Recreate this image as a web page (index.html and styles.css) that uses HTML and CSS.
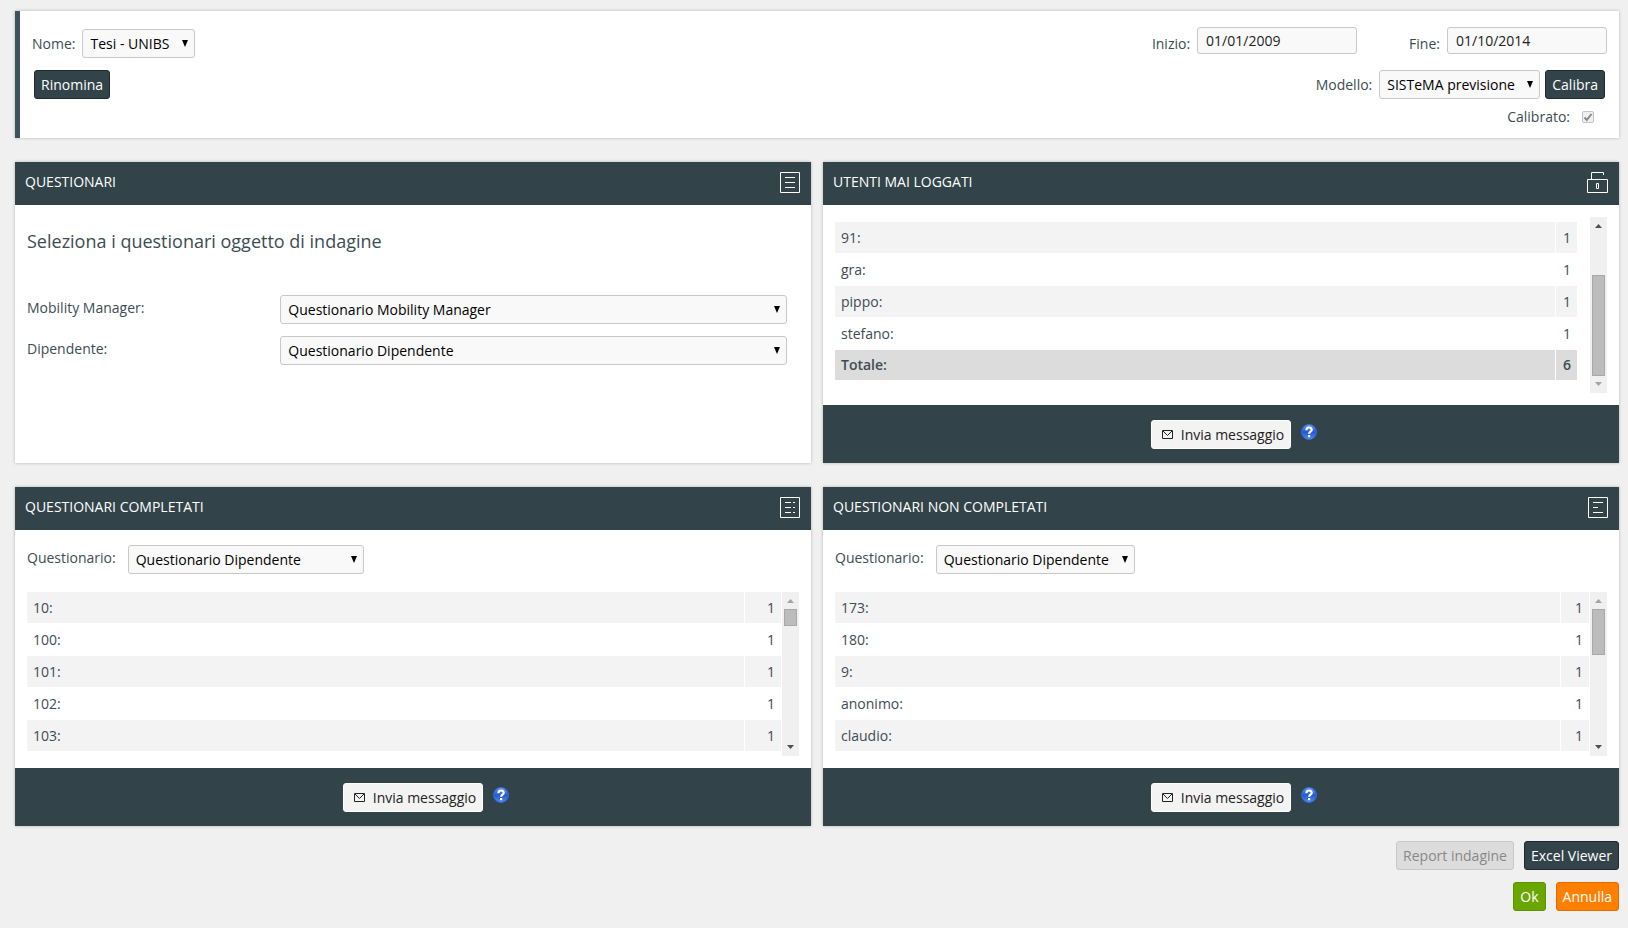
FILE: index.html
```
<!DOCTYPE html>
<html lang="it">
<head>
<meta charset="utf-8">
<title>Indagine</title>
<link rel="stylesheet" href="styles.css">
</head>
<body>
<main class="page">
  <form class="survey">
    <div class="survey-side survey-left">
      <div class="field"><label for="nome">Nome:</label><select id="nome" class="select select-name"><option>Tesi - UNIBS</option></select></div>
      <button type="button" class="btn btn-dark">Rinomina</button>
    </div>
    <div class="survey-side survey-right">
      <div class="dates">
        <div class="field"><label for="inizio">Inizio:</label><input id="inizio" class="input" type="text" value="01/01/2009"></div>
        <div class="field"><label for="fine">Fine:</label><input id="fine" class="input" type="text" value="01/10/2014"></div>
      </div>
      <div class="model">
        <div class="field"><label for="modello">Modello:</label><select id="modello" class="select select-model"><option>SISTeMA previsione</option></select></div>
        <button type="button" class="btn btn-dark">Calibra</button>
      </div>
      <div class="calibrated"><label for="calibrato">Calibrato:</label><input id="calibrato" class="check" type="checkbox" checked disabled></div>
    </div>
  </form>

  <div class="grid">
    <section class="panel">
      <header class="panel-head"><h2>QUESTIONARI</h2>
        <svg class="head-icon" width="20" height="21" viewBox="0 0 20 21"><path d="M.5.5h19v20H.5zM5 5.500h10M5 10.500h10M5 15.500h10"/></svg>
      </header>
      <div class="panel-body choose">
        <h3>Seleziona i questionari oggetto di indagine</h3>
        <div class="choose-row"><label for="mm">Mobility Manager:</label><select id="mm" class="select"><option>Questionario Mobility Manager</option></select></div>
        <div class="choose-row"><label for="dip">Dipendente:</label><select id="dip" class="select"><option>Questionario Dipendente</option></select></div>
      </div>
    </section>

    <section class="panel">
      <header class="panel-head"><h2>UTENTI MAI LOGGATI</h2>
        <svg class="head-icon" width="21" height="21" viewBox="0 0 21 21"><path d="M.5 7.500h20v13H.5zM4.500 7V.5h12V3M9.500 11.500h2v5h-2z"/></svg>
      </header>
      <div class="panel-body">
        <div class="list list-users">
          <table class="rows">
            <tr><th scope="row">91:</th><td>1</td></tr>
            <tr><th scope="row">gra:</th><td>1</td></tr>
            <tr><th scope="row">pippo:</th><td>1</td></tr>
            <tr><th scope="row">stefano:</th><td>1</td></tr>
            <tr class="total"><th scope="row">Totale:</th><td>6</td></tr>
          </table>
          <div class="bar bar-end"><i class="up"></i><span class="thumb"></span><i class="down"></i></div>
        </div>
      </div>
      <footer class="panel-foot">
        <button type="button" class="btn btn-light"><svg width="11" height="9" viewBox="0 0 11 9"><path d="M.5.5h10v8H.5zM1 1l4.500 4.500L10 1"/></svg>Invia messaggio</button>
        <svg class="help" width="16" height="16" viewBox="0 0 16 16"><use href="#help"/></svg>
      </footer>
    </section>

    <section class="panel">
      <header class="panel-head"><h2>QUESTIONARI COMPLETATI</h2>
        <svg class="head-icon" width="20" height="21" viewBox="0 0 20 21"><path d="M.5.5h19v20H.5zM5 5.500h6M13 5.500h2M5 10.500h6M13 10.500h2M5 15.500h6M13 15.500h2"/></svg>
      </header>
      <div class="panel-body">
        <div class="filter"><label for="q1">Questionario:</label><select id="q1" class="select select-done"><option>Questionario Dipendente</option></select></div>
        <div class="list list-done">
          <table class="rows">
            <tr><th scope="row">10:</th><td>1</td></tr>
            <tr><th scope="row">100:</th><td>1</td></tr>
            <tr><th scope="row">101:</th><td>1</td></tr>
            <tr><th scope="row">102:</th><td>1</td></tr>
            <tr><th scope="row">103:</th><td>1</td></tr>
          </table>
          <div class="bar bar-start"><i class="up"></i><span class="thumb"></span><i class="down"></i></div>
        </div>
      </div>
      <footer class="panel-foot">
        <button type="button" class="btn btn-light"><svg width="11" height="9" viewBox="0 0 11 9"><path d="M.5.5h10v8H.5zM1 1l4.500 4.500L10 1"/></svg>Invia messaggio</button>
        <svg class="help" width="16" height="16" viewBox="0 0 16 16"><use href="#help"/></svg>
      </footer>
    </section>

    <section class="panel">
      <header class="panel-head"><h2>QUESTIONARI NON COMPLETATI</h2>
        <svg class="head-icon" width="20" height="21" viewBox="0 0 20 21"><path d="M.5.5h19v20H.5zM5 5.500h10M5 10.500h5M5 15.500h10"/></svg>
      </header>
      <div class="panel-body">
        <div class="filter"><label for="q2">Questionario:</label><select id="q2" class="select select-open"><option>Questionario Dipendente</option></select></div>
        <div class="list list-open">
          <table class="rows">
            <tr><th scope="row">173:</th><td>1</td></tr>
            <tr><th scope="row">180:</th><td>1</td></tr>
            <tr><th scope="row">9:</th><td>1</td></tr>
            <tr><th scope="row">anonimo:</th><td>1</td></tr>
            <tr><th scope="row">claudio:</th><td>1</td></tr>
          </table>
          <div class="bar bar-start"><i class="up"></i><span class="thumb"></span><i class="down"></i></div>
        </div>
      </div>
      <footer class="panel-foot">
        <button type="button" class="btn btn-light"><svg width="11" height="9" viewBox="0 0 11 9"><path d="M.5.5h10v8H.5zM1 1l4.500 4.500L10 1"/></svg>Invia messaggio</button>
        <svg class="help" width="16" height="16" viewBox="0 0 16 16">
          <defs>
            <linearGradient id="helpfill" x1="0" y1="0" x2="0" y2="1"><stop offset="0" stop-color="#6f9cf0"/><stop offset=".5" stop-color="#2458d4"/><stop offset="1" stop-color="#4f8cf0"/></linearGradient>
            <g id="help"><circle cx="8" cy="8" r="7.500" fill="url(#helpfill)" stroke="#3568d4"/><path d="M5.400 6.200C5.400 2.600 10.800 2.700 10.700 6c0 1.700-2.600 1.800-2.600 3.800" fill="none" stroke="#fff" stroke-width="2.200"/><rect x="7" y="11" width="2.200" height="2.200" fill="#fff"/></g>
          </defs>
          <use href="#help"/>
        </svg>
      </footer>
    </section>
  </div>

  <div class="actions">
    <div class="actions-row"><button type="button" class="btn btn-off" disabled>Report indagine</button><button type="button" class="btn btn-dark">Excel Viewer</button></div>
    <div class="actions-row"><button type="button" class="btn btn-ok">Ok</button><button type="button" class="btn btn-cancel">Annulla</button></div>
  </div>
</main>
</body>
</html>
```
FILE: styles.css
```
* { box-sizing: border-box; }

body {
  margin: 0;
  background: #f0f0f0;
  color: #3c4c53;
  font: 400 14px/20px "Open Sans", "Noto Sans", sans-serif;
}

.page { padding: 11px 9px 16px 15px; }

h2, h3 { margin: 0; }

.survey, .panel {
  background: #fff;
  box-shadow: 0 0 3px rgba(0, 0, 0, .25);
}

.survey {
  display: flex;
  justify-content: space-between;
  padding: 16px 12px 11px;
  border-left: 5px solid #3c545b;
}

.survey-side { display: flex; flex-direction: column; gap: 12px; padding-top: 2px; align-items: flex-start; }
.survey-left .btn { margin-left: 2px; }
.survey-right { gap: 11px; padding-top: 0; align-items: flex-end; }
.field { display: flex; align-items: center; gap: 7px; }
.dates { display: flex; gap: 52px; height: 32px; align-items: flex-start; }
.dates label { padding-top: 6px; }
.model { display: flex; gap: 5px; padding-right: 2px; }
.calibrated { display: flex; align-items: center; gap: 12px; padding-right: 13px; margin-top: -3px; }

.select, .input, .btn {
  height: 29px;
  margin: 0;
  border: 1px solid #c8c8c8;
  border-radius: 3px;
  font: 400 14px/20px "Open Sans", "Noto Sans", sans-serif;
}

.select {
  appearance: none;
  padding: 0 16px 0 7px;
  color: #000;
  background: #f9f9f9 url("data:image/svg+xml,%3Csvg xmlns='http://www.w3.org/2000/svg' width='6' height='7'%3E%3Cpath d='M0 0h6L3 7z'/%3E%3C/svg%3E") no-repeat right 6px top 10px;
}

.input { width: 160px; height: 27px; padding: 0 8px; color: #222; background: #f9f9f9; }
.select-name { width: 113px; }
.select-model { width: 161px; }
.select-done { width: 236px; }
.select-open { width: 199px; }

.check {
  appearance: none;
  width: 12px;
  height: 12px;
  margin: 0;
  border: 1px solid #c4c4c4;
  border-radius: 2px;
  background: #f0f0f0 url("data:image/svg+xml,%3Csvg xmlns='http://www.w3.org/2000/svg' width='10' height='10'%3E%3Cpath d='M1.500 5.500l2.300 2.500L8.500 2' fill='none' stroke='%23888' stroke-width='2'/%3E%3C/svg%3E") center no-repeat;
}

.btn { padding: 0 6px; color: #fff; white-space: nowrap; }
.btn-dark { background: #32434a; border-color: #1e2a30; }
.btn-light { display: flex; align-items: center; gap: 8px; padding: 1px 6px 0 10px; background: #f3f3f3; border-color: #fff; color: #222; }
.btn-light svg { fill: none; stroke: #222; }
.btn-off { background: #dcdcdc; border-color: #c8c8c8; color: #888; }
.btn-ok { background: #6aa500; border-color: #5a9200; }
.btn-cancel { background: #ff7f00; border-color: #e06c00; }

.grid {
  display: grid;
  grid-template-columns: 1fr 1fr;
  gap: 24px 12px;
  margin-top: 24px;
}

.panel { display: flex; flex-direction: column; }

.panel-head {
  display: flex;
  align-items: center;
  justify-content: space-between;
  height: 43px;
  padding: 0 11px 2px 10px;
  background: #32434a;
}

.panel-head h2 { color: #fff; font-size: 14px; font-weight: 400; line-height: 20px; padding-bottom: 1px; }
.head-icon { fill: none; stroke: #fff; }
.panel-body { flex: 1; padding: 12px; }

.choose h3 { margin: 12px 0 41px; font-size: 18px; font-weight: 400; line-height: 25px; }
.choose-row { display: grid; grid-template-columns: 1fr 2fr; margin: 0 12px 12px 0; }
.choose-row label { padding-top: 3px; }

.filter { display: flex; gap: 12px; padding-top: 3px; margin-bottom: 18px; }
.filter label { padding-top: 3px; }

.list { display: flex; gap: 1px; height: 164px; }
.list-users { gap: 13px; height: 176px; }
.list-users .rows { margin-top: 5px; }

.rows { flex: 1; align-self: flex-start; border-spacing: 0; }
.rows th, .rows td { height: 32px; padding: 0 6px; border-bottom: 1px solid #fff; font-weight: 400; }
.rows th { text-align: left; border-right: 1px solid #fff; }
.rows td { width: 21px; text-align: right; }
.list-done td { width: 36px; }
.list-open td { width: 28px; }
.rows tr:nth-child(odd) { background: #f3f3f3; }
.rows tr.total { background: #dcdcdc; }
.rows .total th, .rows .total td { height: 30px; border-bottom: 0; font-weight: 600; }

.bar { display: flex; flex-direction: column; align-items: center; width: 17px; padding: 7px 0; background: #f0f0f0; }
.bar i { width: 7px; height: 4px; background: #505050; }
.bar .up { clip-path: polygon(50% 0, 100% 100%, 0 100%); }
.bar .down { margin-top: auto; clip-path: polygon(0 0, 100% 0, 50% 100%); }
.bar-start .up, .bar-end .down { background: #a3a3a3; }
.thumb { width: 13px; height: 17px; margin-top: 6px; background: #bcbcbc; border: 1px solid #a8a8a8; }
.list-open .thumb { height: 46px; }
.list-users .thumb { height: 101px; margin-top: 47px; }

.panel-foot {
  display: grid;
  grid-template-columns: 1fr auto 1fr;
  column-gap: 10px;
  align-items: center;
  height: 58px;
  background: #32434a;
}

.panel-foot .btn { grid-column: 2; }
.help { margin-bottom: 4px; }

.actions { display: flex; flex-direction: column; gap: 12px; margin-top: 15px; }
.actions-row { display: flex; justify-content: flex-end; gap: 10px; }
```
